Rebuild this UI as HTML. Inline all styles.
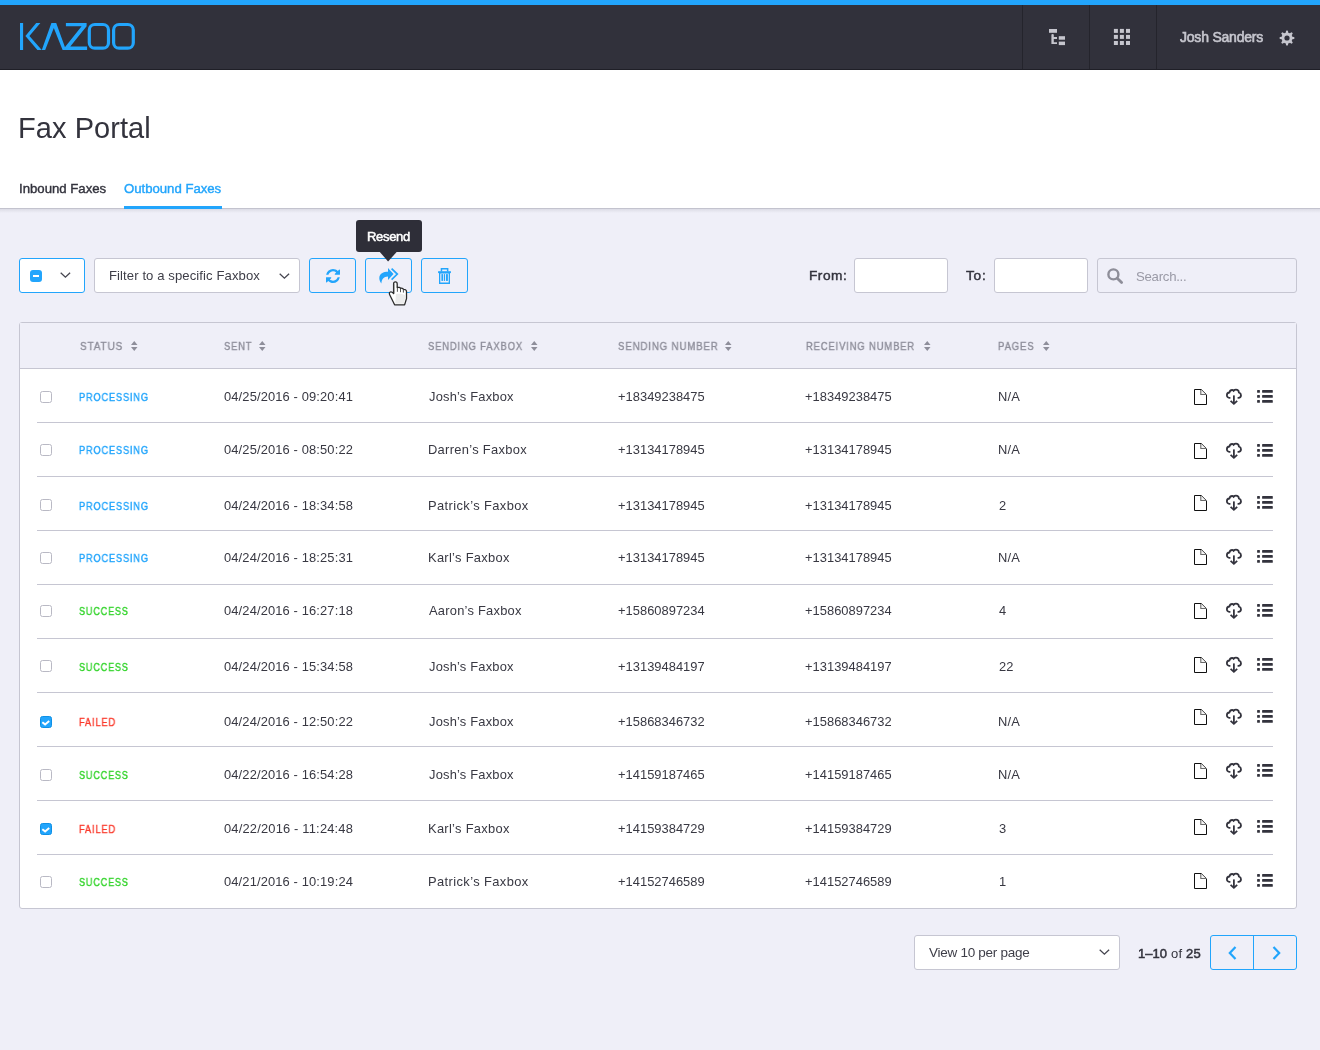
<!DOCTYPE html>
<html><head><meta charset="utf-8"><title>Fax Portal</title>
<style>
html,body{margin:0;padding:0;}
body{width:1320px;height:1050px;position:relative;overflow:hidden;background:#efeff8;font-family:"Liberation Sans", sans-serif;}
.t{position:absolute;white-space:pre;line-height:1;font-family:"Liberation Sans", sans-serif;will-change:transform;}
svg{overflow:visible}
</style></head><body>
<div style="position:absolute;left:0px;top:0px;width:1320px;height:5px;background:#22a5fc"></div>
<div style="position:absolute;left:0px;top:5px;width:1320px;height:64px;background:#31313b"></div>
<div style="position:absolute;left:0px;top:69px;width:1320px;height:1px;background:#1f1f27"></div>
<div style="position:absolute;left:1022px;top:5px;width:1px;height:64px;background:#24242c"></div>
<div style="position:absolute;left:1089px;top:5px;width:1px;height:64px;background:#24242c"></div>
<div style="position:absolute;left:1156px;top:5px;width:1px;height:64px;background:#24242c"></div>
<svg style="position:absolute;left:0px;top:0px;" width="160" height="70" viewBox="0 0 160 70"><g fill="#22a5fc">
<rect x="20" y="23" width="3.1" height="27"/>
<polygon points="36.2,23 40.4,23 29.4,35.9 41.8,50 37.4,50 25.4,35.9"/>
<polygon points="41.8,50 45.2,50 53.8,28 62.6,50 66,50 56.2,23 51.4,23"/>
<polygon points="65.9,23 86.6,23 86.6,26.2 70.3,46.6 87.1,46.6 87.1,50 63.5,50 63.5,49 81.6,26.2 65.9,26.2"/>
</g>
<g fill="none" stroke="#22a5fc" stroke-width="3.2">
<rect x="89.3" y="24.5" width="19.2" height="23.7" rx="5.5"/>
<rect x="113.6" y="24.5" width="19.7" height="23.7" rx="5.5"/>
</g></svg>
<svg style="position:absolute;left:1040px;top:20px;" width="30" height="30" viewBox="1040 20 30 30"><g fill="#c6c6ce">
<rect x="1049" y="29" width="8" height="3.8"/>
<path d="M1051.4 34.6 Q1052.6 33.6 1053.8 34.6 V37.1 H1057 V39 H1053.8 V42.3 H1057 V44.1 H1051.4 Z"/>
<rect x="1058.8" y="36.2" width="6.2" height="3.5"/>
<rect x="1058.8" y="41.6" width="6.2" height="3.5"/>
</g></svg>
<svg style="position:absolute;left:1105px;top:20px;" width="30" height="30" viewBox="1105 20 30 30"><g fill="#c6c6ce"><rect x="1113.9" y="28.9" width="4" height="4"/><rect x="1119.9" y="28.9" width="4" height="4"/><rect x="1126" y="28.9" width="4" height="4"/><rect x="1113.9" y="34.9" width="4" height="4"/><rect x="1119.9" y="34.9" width="4" height="4"/><rect x="1126" y="34.9" width="4" height="4"/><rect x="1113.9" y="41" width="4" height="4"/><rect x="1119.9" y="41" width="4" height="4"/><rect x="1126" y="41" width="4" height="4"/></g></svg>
<div class="t" style="left:1180.00px;top:30.45px;font-size:14px;font-weight:400;color:#c6c6ce;letter-spacing:-0.210px;-webkit-text-stroke:0.6px #c6c6ce;">Josh Sanders</div>
<svg style="position:absolute;left:1278.9px;top:29.9px;" width="16" height="16" viewBox="-8 -8 16 16"><g fill="#c6c6ce"><circle cx="0" cy="0" r="5.5"/><path transform="rotate(0)" d="M-1.35 -4.6 L-0.95 -7.2 Q0 -7.7 0.95 -7.2 L1.35 -4.6 Z"/><path transform="rotate(45)" d="M-1.35 -4.6 L-0.95 -7.2 Q0 -7.7 0.95 -7.2 L1.35 -4.6 Z"/><path transform="rotate(90)" d="M-1.35 -4.6 L-0.95 -7.2 Q0 -7.7 0.95 -7.2 L1.35 -4.6 Z"/><path transform="rotate(135)" d="M-1.35 -4.6 L-0.95 -7.2 Q0 -7.7 0.95 -7.2 L1.35 -4.6 Z"/><path transform="rotate(180)" d="M-1.35 -4.6 L-0.95 -7.2 Q0 -7.7 0.95 -7.2 L1.35 -4.6 Z"/><path transform="rotate(225)" d="M-1.35 -4.6 L-0.95 -7.2 Q0 -7.7 0.95 -7.2 L1.35 -4.6 Z"/><path transform="rotate(270)" d="M-1.35 -4.6 L-0.95 -7.2 Q0 -7.7 0.95 -7.2 L1.35 -4.6 Z"/><path transform="rotate(315)" d="M-1.35 -4.6 L-0.95 -7.2 Q0 -7.7 0.95 -7.2 L1.35 -4.6 Z"/></g><circle cx="0" cy="0" r="2.6" fill="#31313b"/></svg>
<div style="position:absolute;left:0px;top:70px;width:1320px;height:138px;background:#fff"></div>
<div style="position:absolute;left:0px;top:208px;width:1320px;height:1px;background:#c3c3ce"></div>
<div style="position:absolute;left:0px;top:209px;width:1320px;height:4px;background:linear-gradient(#dcdce6,#efeff8)"></div>
<div class="t" style="left:18.10px;top:114.05px;font-size:29px;font-weight:400;color:#33333d;letter-spacing:0.065px;">Fax Portal</div>
<div class="t" style="left:19.10px;top:181.83px;font-size:13.2px;font-weight:400;color:#33333d;letter-spacing:-0.004px;-webkit-text-stroke:0.4px #33333d;">Inbound Faxes</div>
<div class="t" style="left:124.10px;top:181.83px;font-size:13.2px;font-weight:400;color:#22a5fc;letter-spacing:-0.024px;-webkit-text-stroke:0.4px #22a5fc;">Outbound Faxes</div>
<div style="position:absolute;left:124px;top:206px;width:98px;height:3px;background:#22a5fc"></div>
<div style="position:absolute;left:19px;top:258px;width:66px;height:35px;box-sizing:border-box;border:1px solid #22a5fc;border-radius:3px;background:#fff"></div>
<div style="position:absolute;left:30px;top:270px;width:12px;height:12px;background:#22a5fc;border-radius:3px"></div>
<div style="position:absolute;left:32.8px;top:274.8px;width:6.4px;height:2.4px;background:#fff"></div>
<svg style="position:absolute;left:59.5px;top:272.4px;" width="12" height="7" viewBox="0 0 12 7"><polyline points="0.7,0.7 5.4,5.1 10.1,0.7" fill="none" stroke="#45454f" stroke-width="1.3"/></svg>
<div style="position:absolute;left:94px;top:258px;width:206px;height:35px;box-sizing:border-box;border:1px solid #c6c6d2;border-radius:3px;background:#fff"></div>
<div class="t" style="left:108.70px;top:268.91px;font-size:13.1px;font-weight:400;color:#3e3e48;letter-spacing:0.092px;">Filter to a specific Faxbox</div>
<svg style="position:absolute;left:278.8px;top:272.6px;" width="12" height="7" viewBox="0 0 12 7"><polyline points="0.7,0.7 5.4,5.1 10.1,0.7" fill="none" stroke="#45454f" stroke-width="1.3"/></svg>
<div style="position:absolute;left:309px;top:258px;width:47px;height:35px;box-sizing:border-box;border:1px solid #22a5fc;border-radius:3px"></div>
<div style="position:absolute;left:365px;top:258px;width:47px;height:35px;box-sizing:border-box;border:1px solid #22a5fc;border-radius:3px"></div>
<div style="position:absolute;left:421px;top:258px;width:47px;height:35px;box-sizing:border-box;border:1px solid #22a5fc;border-radius:3px"></div>
<svg style="position:absolute;left:326px;top:269px;" width="14" height="14" viewBox="0 0 1536 1536"><path fill="#22a5fc" d="M1511 928q0 5-1 7-64 268-268 434.5T764 1536q-146 0-282.5-55T238 1324l-129 129q-19 19-45 19t-45-19-19-45V960q0-26 19-45t45-19h448q26 0 45 19t19 45-19 45l-137 137q71 66 161 102t187 36q134 0 250-65t186-179q11-17 53-117 8-23 30-23h192q13 0 22.5 9.5t9.5 22.5zm25-800v448q0 26-19 45t-45 19h-448q-26 0-45-19t-19-45 19-45l138-138Q969 256 768 256q-134 0-250 65T332 500q-11 17-53 117-8 23-30 23H50q-13 0-22.5-9.5T18 608v-7q65-268 270-434.5T768 0q146 0 284 55.5T1297 212l130-129q19-19 45-19t45 19 19 45z"/></svg>
<svg style="position:absolute;left:378.5px;top:268px;" width="20" height="16" viewBox="0 0 20 16"><path fill="#22a5fc" d="M14.5 6.1 L9 0 L9 3.8 C4.5 3.8 0.3 5.5 0.3 10.3 C0.3 12.3 1.4 14.3 2.4 15.5 C2.6 11.8 4.5 8.6 9 8.6 L9 12.1 Z"/>
<polyline points="12.6,0.6 18.3,6.1 12.6,11.6" fill="none" stroke="#22a5fc" stroke-width="1.7"/></svg>
<svg style="position:absolute;left:438px;top:268px;" width="13" height="16" viewBox="0 0 12.8 16"><g fill="#22a5fc">
<path d="M2.6 0 H10.3 V3.6 H8.8 V1.4 H4.1 V3.6 H2.6 Z"/>
<rect x="0" y="3.2" width="12.8" height="1.9"/>
<path d="M0.9 4.8 H11.9 V15.9 H0.9 Z M2.2 5.6 V14.5 H10.6 V5.6 Z" fill-rule="evenodd"/>
<rect x="3.3" y="6.1" width="1.8" height="6.8"/>
<rect x="5.9" y="6.1" width="1.1" height="6.8"/>
<rect x="7.9" y="6.1" width="1.9" height="6.8"/>
</g></svg>
<div style="position:absolute;left:356px;top:220px;width:66px;height:32px;background:#2e2e38;border-radius:3px"></div>
<svg style="position:absolute;left:378.8px;top:251px;" width="20" height="11" viewBox="0 0 20 11"><polygon points="0,0 18.5,0 9.1,10.6" fill="#2e2e38"/></svg>
<div class="t" style="left:366.80px;top:230.00px;font-size:13px;font-weight:400;color:#ffffff;letter-spacing:-0.316px;-webkit-text-stroke:0.5px #ffffff;">Resend</div>
<svg style="position:absolute;left:384px;top:278px;" width="28" height="30" viewBox="384 278 28 30"><path d="M393.6 284 C393.6 281.2 397.2 281.2 397.2 284 L397.2 287.6 C398.5 287 400.3 287.3 400.5 288.4 C401.6 288 403.2 288.3 403.4 289.3 C404.8 289.2 406.5 289.9 406.5 291.6 L406.5 298.6 L404.6 304.8 L394.6 304.8 L389.8 295 C389 293.6 389.3 292.4 390.4 292 C391.6 291.6 392.6 292.4 393.6 293.6 Z" fill="#fff" stroke="#2a2a2a" stroke-width="1.3" stroke-linejoin="round"/>
<path d="M397.4 287.9 V291.8 M400.5 288.7 V292.2 M403.4 289.5 V292.6" stroke="#555" stroke-width="1" fill="none"/>
<path d="M394.4 284 V293.5" stroke="#999" stroke-width="0.8" fill="none"/>
<path d="M396 294 C399 293.5 404 294 405.5 295.5 L404 303.8 L395.2 303.8 Z" fill="#ececec"/></svg>
<div class="t" style="left:809.30px;top:268.70px;font-size:13.7px;font-weight:400;color:#33333d;letter-spacing:0.492px;-webkit-text-stroke:0.45px #33333d;">From:</div>
<div style="position:absolute;left:854px;top:258px;width:94px;height:35px;box-sizing:border-box;border:1px solid #c6c6d2;border-radius:3px;background:#fff"></div>
<div class="t" style="left:966.20px;top:268.70px;font-size:13.7px;font-weight:400;color:#33333d;letter-spacing:0.773px;-webkit-text-stroke:0.45px #33333d;">To:</div>
<div style="position:absolute;left:994px;top:258px;width:94px;height:35px;box-sizing:border-box;border:1px solid #c6c6d2;border-radius:3px;background:#fff"></div>
<div style="position:absolute;left:1097px;top:258px;width:200px;height:35px;box-sizing:border-box;border:1px solid #c6c6d2;border-radius:3px"></div>
<svg style="position:absolute;left:1106.5px;top:267.5px;" width="16" height="16" viewBox="0 0 16 16"><g fill="none" stroke="#8e8e99"><circle cx="6.4" cy="6.4" r="5" stroke-width="2.4"/><line x1="10.2" y1="10.2" x2="14.6" y2="14.6" stroke-width="2.8" stroke-linecap="round"/></g></svg>
<div class="t" style="left:1135.80px;top:270.23px;font-size:13.2px;font-weight:400;color:#9a9aa6;letter-spacing:-0.264px;">Search...</div>
<div style="position:absolute;left:19px;top:322px;width:1278px;height:587px;box-sizing:border-box;border:1px solid #c6c6d2;border-radius:3px;background:#fff;overflow:hidden"></div>
<div style="position:absolute;left:20px;top:323px;width:1276px;height:45px;background:#efeff8"></div>
<div style="position:absolute;left:20px;top:368px;width:1276px;height:1px;background:#c6c6d2"></div>
<div class="t" style="left:80.40px;top:340.92px;font-size:11.2px;font-weight:400;color:#8e8e9a;letter-spacing:1.000px;transform:scaleX(0.8892);transform-origin:0 0;-webkit-text-stroke:0.4px #8e8e9a;">STATUS</div>
<svg style="position:absolute;left:130.7px;top:341px;" width="6.5" height="10" viewBox="0 0 6.5 10"><g fill="#8e8e9a"><polygon points="0,4 3.25,0 6.5,4"/><polygon points="0,6 3.25,10 6.5,6"/></g></svg>
<div class="t" style="left:223.60px;top:340.92px;font-size:11.2px;font-weight:400;color:#8e8e9a;letter-spacing:1.000px;transform:scaleX(0.8363);transform-origin:0 0;-webkit-text-stroke:0.4px #8e8e9a;">SENT</div>
<svg style="position:absolute;left:259px;top:341px;" width="6.5" height="10" viewBox="0 0 6.5 10"><g fill="#8e8e9a"><polygon points="0,4 3.25,0 6.5,4"/><polygon points="0,6 3.25,10 6.5,6"/></g></svg>
<div class="t" style="left:427.50px;top:340.92px;font-size:11.2px;font-weight:400;color:#8e8e9a;letter-spacing:1.000px;transform:scaleX(0.8409);transform-origin:0 0;-webkit-text-stroke:0.4px #8e8e9a;">SENDING FAXBOX</div>
<svg style="position:absolute;left:531px;top:341px;" width="6.5" height="10" viewBox="0 0 6.5 10"><g fill="#8e8e9a"><polygon points="0,4 3.25,0 6.5,4"/><polygon points="0,6 3.25,10 6.5,6"/></g></svg>
<div class="t" style="left:618.10px;top:340.92px;font-size:11.2px;font-weight:400;color:#8e8e9a;letter-spacing:1.000px;transform:scaleX(0.8633);transform-origin:0 0;-webkit-text-stroke:0.4px #8e8e9a;">SENDING NUMBER</div>
<svg style="position:absolute;left:724.8px;top:341px;" width="6.5" height="10" viewBox="0 0 6.5 10"><g fill="#8e8e9a"><polygon points="0,4 3.25,0 6.5,4"/><polygon points="0,6 3.25,10 6.5,6"/></g></svg>
<div class="t" style="left:805.50px;top:340.92px;font-size:11.2px;font-weight:400;color:#8e8e9a;letter-spacing:1.000px;transform:scaleX(0.8442);transform-origin:0 0;-webkit-text-stroke:0.4px #8e8e9a;">RECEIVING NUMBER</div>
<svg style="position:absolute;left:924px;top:341px;" width="6.5" height="10" viewBox="0 0 6.5 10"><g fill="#8e8e9a"><polygon points="0,4 3.25,0 6.5,4"/><polygon points="0,6 3.25,10 6.5,6"/></g></svg>
<div class="t" style="left:998.10px;top:340.92px;font-size:11.2px;font-weight:400;color:#8e8e9a;letter-spacing:1.000px;transform:scaleX(0.8556);transform-origin:0 0;-webkit-text-stroke:0.4px #8e8e9a;">PAGES</div>
<svg style="position:absolute;left:1043px;top:341px;" width="6.5" height="10" viewBox="0 0 6.5 10"><g fill="#8e8e9a"><polygon points="0,4 3.25,0 6.5,4"/><polygon points="0,6 3.25,10 6.5,6"/></g></svg>
<div style="position:absolute;left:40px;top:391px;width:12px;height:12px;box-sizing:border-box;background:#fff;border:1px solid #b9b9c4;border-radius:2.5px"></div>
<div class="t" style="left:79.20px;top:391.79px;font-size:11px;font-weight:400;color:#22a5fc;letter-spacing:1.000px;transform:scaleX(0.8387);transform-origin:0 0;-webkit-text-stroke:0.4px #22a5fc;">PROCESSING</div>
<div class="t" style="left:224.00px;top:390.78px;font-size:12.9px;font-weight:400;color:#383842;letter-spacing:0.136px;">04/25/2016 - 09:20:41</div>
<div class="t" style="left:429.20px;top:390.78px;font-size:12.9px;font-weight:400;color:#383842;letter-spacing:0.191px;">Josh’s Faxbox</div>
<div class="t" style="left:617.70px;top:390.78px;font-size:12.9px;font-weight:400;color:#383842;letter-spacing:0.025px;">+18349238475</div>
<div class="t" style="left:804.50px;top:390.78px;font-size:12.9px;font-weight:400;color:#383842;letter-spacing:0.025px;">+18349238475</div>
<div class="t" style="left:998.20px;top:390.78px;font-size:12.9px;font-weight:400;color:#383842;letter-spacing:0.155px;">N/A</div>
<svg style="position:absolute;left:1194px;top:389px;" width="13" height="16" viewBox="0 0 13 16"><path d="M0.5 0.5 H7.2 L12.5 5.8 V15.5 H0.5 Z" fill="#fff" stroke="#111" stroke-width="1" stroke-linejoin="miter"/>
<path d="M7.1 0.9 L12.1 5.9 H6.8 Z" fill="#f4f4f4"/>
<path d="M6.8 0.9 V5.5 H12.2" fill="none" stroke="#6a6a6a" stroke-width="1.1"/></svg>
<svg style="position:absolute;left:1226px;top:389px;" width="16.2" height="16" viewBox="0 0 16.2 16"><g fill="none" stroke="#33333d" stroke-width="1.8">
<path d="M4.4 8.8 H3.2 C1.8 8.8 0.9 7.6 0.9 6.2 C0.9 4.7 2 3.6 3.4 3.5 C3.8 1.9 4.8 1 6.1 1 C6.8 1 7.3 1.3 7.6 1.8 C8.2 1.1 9 0.7 10 0.7 C11.6 0.7 12.8 1.9 12.9 3.5 C14.2 3.9 15 4.9 15 6.2 C15 7.7 13.9 8.8 12.4 8.8 H11.6"/>
<path d="M7.9 6.4 V14.8"/><path d="M4.6 11.8 L7.9 14.8 L11.2 11.8"/>
</g></svg>
<svg style="position:absolute;left:1257px;top:390px;" width="16" height="13" viewBox="0 0 16 13"><g fill="#33333d"><rect x="0.1" y="0" width="2.8" height="2.75" rx="0.5"/><rect x="5.1" y="0" width="10.7" height="2.75" rx="0.6"/><rect x="0.1" y="5.05" width="2.8" height="2.75" rx="0.5"/><rect x="5.1" y="5.05" width="10.7" height="2.75" rx="0.6"/><rect x="0.1" y="10.1" width="2.8" height="2.75" rx="0.5"/><rect x="5.1" y="10.1" width="10.7" height="2.75" rx="0.6"/></g></svg>
<div style="position:absolute;left:37px;top:422px;width:1236px;height:1px;background:#c6c6d2"></div>
<div style="position:absolute;left:40px;top:444px;width:12px;height:12px;box-sizing:border-box;background:#fff;border:1px solid #b9b9c4;border-radius:2.5px"></div>
<div class="t" style="left:79.20px;top:444.89px;font-size:11px;font-weight:400;color:#22a5fc;letter-spacing:1.000px;transform:scaleX(0.8387);transform-origin:0 0;-webkit-text-stroke:0.4px #22a5fc;">PROCESSING</div>
<div class="t" style="left:224.00px;top:443.88px;font-size:12.9px;font-weight:400;color:#383842;letter-spacing:0.136px;">04/25/2016 - 08:50:22</div>
<div class="t" style="left:428.20px;top:443.88px;font-size:12.9px;font-weight:400;color:#383842;letter-spacing:0.308px;">Darren’s Faxbox</div>
<div class="t" style="left:617.70px;top:443.88px;font-size:12.9px;font-weight:400;color:#383842;letter-spacing:0.025px;">+13134178945</div>
<div class="t" style="left:804.50px;top:443.88px;font-size:12.9px;font-weight:400;color:#383842;letter-spacing:0.025px;">+13134178945</div>
<div class="t" style="left:998.20px;top:443.88px;font-size:12.9px;font-weight:400;color:#383842;letter-spacing:0.155px;">N/A</div>
<svg style="position:absolute;left:1194px;top:443px;" width="13" height="16" viewBox="0 0 13 16"><path d="M0.5 0.5 H7.2 L12.5 5.8 V15.5 H0.5 Z" fill="#fff" stroke="#111" stroke-width="1" stroke-linejoin="miter"/>
<path d="M7.1 0.9 L12.1 5.9 H6.8 Z" fill="#f4f4f4"/>
<path d="M6.8 0.9 V5.5 H12.2" fill="none" stroke="#6a6a6a" stroke-width="1.1"/></svg>
<svg style="position:absolute;left:1226px;top:443px;" width="16.2" height="16" viewBox="0 0 16.2 16"><g fill="none" stroke="#33333d" stroke-width="1.8">
<path d="M4.4 8.8 H3.2 C1.8 8.8 0.9 7.6 0.9 6.2 C0.9 4.7 2 3.6 3.4 3.5 C3.8 1.9 4.8 1 6.1 1 C6.8 1 7.3 1.3 7.6 1.8 C8.2 1.1 9 0.7 10 0.7 C11.6 0.7 12.8 1.9 12.9 3.5 C14.2 3.9 15 4.9 15 6.2 C15 7.7 13.9 8.8 12.4 8.8 H11.6"/>
<path d="M7.9 6.4 V14.8"/><path d="M4.6 11.8 L7.9 14.8 L11.2 11.8"/>
</g></svg>
<svg style="position:absolute;left:1257px;top:444px;" width="16" height="13" viewBox="0 0 16 13"><g fill="#33333d"><rect x="0.1" y="0" width="2.8" height="2.75" rx="0.5"/><rect x="5.1" y="0" width="10.7" height="2.75" rx="0.6"/><rect x="0.1" y="5.05" width="2.8" height="2.75" rx="0.5"/><rect x="5.1" y="5.05" width="10.7" height="2.75" rx="0.6"/><rect x="0.1" y="10.1" width="2.8" height="2.75" rx="0.5"/><rect x="5.1" y="10.1" width="10.7" height="2.75" rx="0.6"/></g></svg>
<div style="position:absolute;left:37px;top:476px;width:1236px;height:1px;background:#c6c6d2"></div>
<div style="position:absolute;left:40px;top:499px;width:12px;height:12px;box-sizing:border-box;background:#fff;border:1px solid #b9b9c4;border-radius:2.5px"></div>
<div class="t" style="left:79.20px;top:500.69px;font-size:11px;font-weight:400;color:#22a5fc;letter-spacing:1.000px;transform:scaleX(0.8387);transform-origin:0 0;-webkit-text-stroke:0.4px #22a5fc;">PROCESSING</div>
<div class="t" style="left:224.00px;top:499.68px;font-size:12.9px;font-weight:400;color:#383842;letter-spacing:0.136px;">04/24/2016 - 18:34:58</div>
<div class="t" style="left:428.20px;top:499.68px;font-size:12.9px;font-weight:400;color:#383842;letter-spacing:0.395px;">Patrick’s Faxbox</div>
<div class="t" style="left:617.70px;top:499.68px;font-size:12.9px;font-weight:400;color:#383842;letter-spacing:0.025px;">+13134178945</div>
<div class="t" style="left:804.50px;top:499.68px;font-size:12.9px;font-weight:400;color:#383842;letter-spacing:0.025px;">+13134178945</div>
<div class="t" style="left:999.20px;top:499.68px;font-size:12.9px;font-weight:400;color:#383842;letter-spacing:0.200px;">2</div>
<svg style="position:absolute;left:1194px;top:495px;" width="13" height="16" viewBox="0 0 13 16"><path d="M0.5 0.5 H7.2 L12.5 5.8 V15.5 H0.5 Z" fill="#fff" stroke="#111" stroke-width="1" stroke-linejoin="miter"/>
<path d="M7.1 0.9 L12.1 5.9 H6.8 Z" fill="#f4f4f4"/>
<path d="M6.8 0.9 V5.5 H12.2" fill="none" stroke="#6a6a6a" stroke-width="1.1"/></svg>
<svg style="position:absolute;left:1226px;top:495px;" width="16.2" height="16" viewBox="0 0 16.2 16"><g fill="none" stroke="#33333d" stroke-width="1.8">
<path d="M4.4 8.8 H3.2 C1.8 8.8 0.9 7.6 0.9 6.2 C0.9 4.7 2 3.6 3.4 3.5 C3.8 1.9 4.8 1 6.1 1 C6.8 1 7.3 1.3 7.6 1.8 C8.2 1.1 9 0.7 10 0.7 C11.6 0.7 12.8 1.9 12.9 3.5 C14.2 3.9 15 4.9 15 6.2 C15 7.7 13.9 8.8 12.4 8.8 H11.6"/>
<path d="M7.9 6.4 V14.8"/><path d="M4.6 11.8 L7.9 14.8 L11.2 11.8"/>
</g></svg>
<svg style="position:absolute;left:1257px;top:496px;" width="16" height="13" viewBox="0 0 16 13"><g fill="#33333d"><rect x="0.1" y="0" width="2.8" height="2.75" rx="0.5"/><rect x="5.1" y="0" width="10.7" height="2.75" rx="0.6"/><rect x="0.1" y="5.05" width="2.8" height="2.75" rx="0.5"/><rect x="5.1" y="5.05" width="10.7" height="2.75" rx="0.6"/><rect x="0.1" y="10.1" width="2.8" height="2.75" rx="0.5"/><rect x="5.1" y="10.1" width="10.7" height="2.75" rx="0.6"/></g></svg>
<div style="position:absolute;left:37px;top:530px;width:1236px;height:1px;background:#c6c6d2"></div>
<div style="position:absolute;left:40px;top:552px;width:12px;height:12px;box-sizing:border-box;background:#fff;border:1px solid #b9b9c4;border-radius:2.5px"></div>
<div class="t" style="left:79.20px;top:552.79px;font-size:11px;font-weight:400;color:#22a5fc;letter-spacing:1.000px;transform:scaleX(0.8387);transform-origin:0 0;-webkit-text-stroke:0.4px #22a5fc;">PROCESSING</div>
<div class="t" style="left:224.00px;top:551.78px;font-size:12.9px;font-weight:400;color:#383842;letter-spacing:0.136px;">04/24/2016 - 18:25:31</div>
<div class="t" style="left:428.20px;top:551.78px;font-size:12.9px;font-weight:400;color:#383842;letter-spacing:0.299px;">Karl’s Faxbox</div>
<div class="t" style="left:617.70px;top:551.78px;font-size:12.9px;font-weight:400;color:#383842;letter-spacing:0.025px;">+13134178945</div>
<div class="t" style="left:804.50px;top:551.78px;font-size:12.9px;font-weight:400;color:#383842;letter-spacing:0.025px;">+13134178945</div>
<div class="t" style="left:998.20px;top:551.78px;font-size:12.9px;font-weight:400;color:#383842;letter-spacing:0.155px;">N/A</div>
<svg style="position:absolute;left:1194px;top:549px;" width="13" height="16" viewBox="0 0 13 16"><path d="M0.5 0.5 H7.2 L12.5 5.8 V15.5 H0.5 Z" fill="#fff" stroke="#111" stroke-width="1" stroke-linejoin="miter"/>
<path d="M7.1 0.9 L12.1 5.9 H6.8 Z" fill="#f4f4f4"/>
<path d="M6.8 0.9 V5.5 H12.2" fill="none" stroke="#6a6a6a" stroke-width="1.1"/></svg>
<svg style="position:absolute;left:1226px;top:549px;" width="16.2" height="16" viewBox="0 0 16.2 16"><g fill="none" stroke="#33333d" stroke-width="1.8">
<path d="M4.4 8.8 H3.2 C1.8 8.8 0.9 7.6 0.9 6.2 C0.9 4.7 2 3.6 3.4 3.5 C3.8 1.9 4.8 1 6.1 1 C6.8 1 7.3 1.3 7.6 1.8 C8.2 1.1 9 0.7 10 0.7 C11.6 0.7 12.8 1.9 12.9 3.5 C14.2 3.9 15 4.9 15 6.2 C15 7.7 13.9 8.8 12.4 8.8 H11.6"/>
<path d="M7.9 6.4 V14.8"/><path d="M4.6 11.8 L7.9 14.8 L11.2 11.8"/>
</g></svg>
<svg style="position:absolute;left:1257px;top:550px;" width="16" height="13" viewBox="0 0 16 13"><g fill="#33333d"><rect x="0.1" y="0" width="2.8" height="2.75" rx="0.5"/><rect x="5.1" y="0" width="10.7" height="2.75" rx="0.6"/><rect x="0.1" y="5.05" width="2.8" height="2.75" rx="0.5"/><rect x="5.1" y="5.05" width="10.7" height="2.75" rx="0.6"/><rect x="0.1" y="10.1" width="2.8" height="2.75" rx="0.5"/><rect x="5.1" y="10.1" width="10.7" height="2.75" rx="0.6"/></g></svg>
<div style="position:absolute;left:37px;top:584px;width:1236px;height:1px;background:#c6c6d2"></div>
<div style="position:absolute;left:40px;top:605px;width:12px;height:12px;box-sizing:border-box;background:#fff;border:1px solid #b9b9c4;border-radius:2.5px"></div>
<div class="t" style="left:79.20px;top:605.69px;font-size:11px;font-weight:400;color:#33d42b;letter-spacing:1.000px;transform:scaleX(0.8259);transform-origin:0 0;-webkit-text-stroke:0.4px #33d42b;">SUCCESS</div>
<div class="t" style="left:224.00px;top:604.68px;font-size:12.9px;font-weight:400;color:#383842;letter-spacing:0.136px;">04/24/2016 - 16:27:18</div>
<div class="t" style="left:429.20px;top:604.68px;font-size:12.9px;font-weight:400;color:#383842;letter-spacing:0.240px;">Aaron’s Faxbox</div>
<div class="t" style="left:617.70px;top:604.68px;font-size:12.9px;font-weight:400;color:#383842;letter-spacing:0.025px;">+15860897234</div>
<div class="t" style="left:804.50px;top:604.68px;font-size:12.9px;font-weight:400;color:#383842;letter-spacing:0.025px;">+15860897234</div>
<div class="t" style="left:999.20px;top:604.68px;font-size:12.9px;font-weight:400;color:#383842;letter-spacing:0.200px;">4</div>
<svg style="position:absolute;left:1194px;top:603px;" width="13" height="16" viewBox="0 0 13 16"><path d="M0.5 0.5 H7.2 L12.5 5.8 V15.5 H0.5 Z" fill="#fff" stroke="#111" stroke-width="1" stroke-linejoin="miter"/>
<path d="M7.1 0.9 L12.1 5.9 H6.8 Z" fill="#f4f4f4"/>
<path d="M6.8 0.9 V5.5 H12.2" fill="none" stroke="#6a6a6a" stroke-width="1.1"/></svg>
<svg style="position:absolute;left:1226px;top:603px;" width="16.2" height="16" viewBox="0 0 16.2 16"><g fill="none" stroke="#33333d" stroke-width="1.8">
<path d="M4.4 8.8 H3.2 C1.8 8.8 0.9 7.6 0.9 6.2 C0.9 4.7 2 3.6 3.4 3.5 C3.8 1.9 4.8 1 6.1 1 C6.8 1 7.3 1.3 7.6 1.8 C8.2 1.1 9 0.7 10 0.7 C11.6 0.7 12.8 1.9 12.9 3.5 C14.2 3.9 15 4.9 15 6.2 C15 7.7 13.9 8.8 12.4 8.8 H11.6"/>
<path d="M7.9 6.4 V14.8"/><path d="M4.6 11.8 L7.9 14.8 L11.2 11.8"/>
</g></svg>
<svg style="position:absolute;left:1257px;top:604px;" width="16" height="13" viewBox="0 0 16 13"><g fill="#33333d"><rect x="0.1" y="0" width="2.8" height="2.75" rx="0.5"/><rect x="5.1" y="0" width="10.7" height="2.75" rx="0.6"/><rect x="0.1" y="5.05" width="2.8" height="2.75" rx="0.5"/><rect x="5.1" y="5.05" width="10.7" height="2.75" rx="0.6"/><rect x="0.1" y="10.1" width="2.8" height="2.75" rx="0.5"/><rect x="5.1" y="10.1" width="10.7" height="2.75" rx="0.6"/></g></svg>
<div style="position:absolute;left:37px;top:638px;width:1236px;height:1px;background:#c6c6d2"></div>
<div style="position:absolute;left:40px;top:660px;width:12px;height:12px;box-sizing:border-box;background:#fff;border:1px solid #b9b9c4;border-radius:2.5px"></div>
<div class="t" style="left:79.20px;top:661.69px;font-size:11px;font-weight:400;color:#33d42b;letter-spacing:1.000px;transform:scaleX(0.8259);transform-origin:0 0;-webkit-text-stroke:0.4px #33d42b;">SUCCESS</div>
<div class="t" style="left:224.00px;top:660.68px;font-size:12.9px;font-weight:400;color:#383842;letter-spacing:0.136px;">04/24/2016 - 15:34:58</div>
<div class="t" style="left:429.20px;top:660.68px;font-size:12.9px;font-weight:400;color:#383842;letter-spacing:0.191px;">Josh’s Faxbox</div>
<div class="t" style="left:617.70px;top:660.68px;font-size:12.9px;font-weight:400;color:#383842;letter-spacing:0.025px;">+13139484197</div>
<div class="t" style="left:804.50px;top:660.68px;font-size:12.9px;font-weight:400;color:#383842;letter-spacing:0.025px;">+13139484197</div>
<div class="t" style="left:999.20px;top:660.68px;font-size:12.9px;font-weight:400;color:#383842;letter-spacing:0.200px;">22</div>
<svg style="position:absolute;left:1194px;top:657px;" width="13" height="16" viewBox="0 0 13 16"><path d="M0.5 0.5 H7.2 L12.5 5.8 V15.5 H0.5 Z" fill="#fff" stroke="#111" stroke-width="1" stroke-linejoin="miter"/>
<path d="M7.1 0.9 L12.1 5.9 H6.8 Z" fill="#f4f4f4"/>
<path d="M6.8 0.9 V5.5 H12.2" fill="none" stroke="#6a6a6a" stroke-width="1.1"/></svg>
<svg style="position:absolute;left:1226px;top:657px;" width="16.2" height="16" viewBox="0 0 16.2 16"><g fill="none" stroke="#33333d" stroke-width="1.8">
<path d="M4.4 8.8 H3.2 C1.8 8.8 0.9 7.6 0.9 6.2 C0.9 4.7 2 3.6 3.4 3.5 C3.8 1.9 4.8 1 6.1 1 C6.8 1 7.3 1.3 7.6 1.8 C8.2 1.1 9 0.7 10 0.7 C11.6 0.7 12.8 1.9 12.9 3.5 C14.2 3.9 15 4.9 15 6.2 C15 7.7 13.9 8.8 12.4 8.8 H11.6"/>
<path d="M7.9 6.4 V14.8"/><path d="M4.6 11.8 L7.9 14.8 L11.2 11.8"/>
</g></svg>
<svg style="position:absolute;left:1257px;top:658px;" width="16" height="13" viewBox="0 0 16 13"><g fill="#33333d"><rect x="0.1" y="0" width="2.8" height="2.75" rx="0.5"/><rect x="5.1" y="0" width="10.7" height="2.75" rx="0.6"/><rect x="0.1" y="5.05" width="2.8" height="2.75" rx="0.5"/><rect x="5.1" y="5.05" width="10.7" height="2.75" rx="0.6"/><rect x="0.1" y="10.1" width="2.8" height="2.75" rx="0.5"/><rect x="5.1" y="10.1" width="10.7" height="2.75" rx="0.6"/></g></svg>
<div style="position:absolute;left:37px;top:692px;width:1236px;height:1px;background:#c6c6d2"></div>
<div style="position:absolute;left:40px;top:716px;width:12px;height:12px;box-sizing:border-box;background:#22a5fc;border:1px solid #0e90e6;border-radius:2.5px"></div>
<svg style="position:absolute;left:40px;top:716px;" width="12" height="12" viewBox="0 0 12 12"><polyline points="2.3,6.3 5.1,8.4 9.2,5" fill="none" stroke="#fff" stroke-width="2"/></svg>
<div class="t" style="left:79.20px;top:716.59px;font-size:11px;font-weight:400;color:#fa3a2c;letter-spacing:1.000px;transform:scaleX(0.8426);transform-origin:0 0;-webkit-text-stroke:0.4px #fa3a2c;">FAILED</div>
<div class="t" style="left:224.00px;top:715.58px;font-size:12.9px;font-weight:400;color:#383842;letter-spacing:0.136px;">04/24/2016 - 12:50:22</div>
<div class="t" style="left:429.20px;top:715.58px;font-size:12.9px;font-weight:400;color:#383842;letter-spacing:0.191px;">Josh’s Faxbox</div>
<div class="t" style="left:617.70px;top:715.58px;font-size:12.9px;font-weight:400;color:#383842;letter-spacing:0.025px;">+15868346732</div>
<div class="t" style="left:804.50px;top:715.58px;font-size:12.9px;font-weight:400;color:#383842;letter-spacing:0.025px;">+15868346732</div>
<div class="t" style="left:998.20px;top:715.58px;font-size:12.9px;font-weight:400;color:#383842;letter-spacing:0.155px;">N/A</div>
<svg style="position:absolute;left:1194px;top:709px;" width="13" height="16" viewBox="0 0 13 16"><path d="M0.5 0.5 H7.2 L12.5 5.8 V15.5 H0.5 Z" fill="#fff" stroke="#111" stroke-width="1" stroke-linejoin="miter"/>
<path d="M7.1 0.9 L12.1 5.9 H6.8 Z" fill="#f4f4f4"/>
<path d="M6.8 0.9 V5.5 H12.2" fill="none" stroke="#6a6a6a" stroke-width="1.1"/></svg>
<svg style="position:absolute;left:1226px;top:709px;" width="16.2" height="16" viewBox="0 0 16.2 16"><g fill="none" stroke="#33333d" stroke-width="1.8">
<path d="M4.4 8.8 H3.2 C1.8 8.8 0.9 7.6 0.9 6.2 C0.9 4.7 2 3.6 3.4 3.5 C3.8 1.9 4.8 1 6.1 1 C6.8 1 7.3 1.3 7.6 1.8 C8.2 1.1 9 0.7 10 0.7 C11.6 0.7 12.8 1.9 12.9 3.5 C14.2 3.9 15 4.9 15 6.2 C15 7.7 13.9 8.8 12.4 8.8 H11.6"/>
<path d="M7.9 6.4 V14.8"/><path d="M4.6 11.8 L7.9 14.8 L11.2 11.8"/>
</g></svg>
<svg style="position:absolute;left:1257px;top:710px;" width="16" height="13" viewBox="0 0 16 13"><g fill="#33333d"><rect x="0.1" y="0" width="2.8" height="2.75" rx="0.5"/><rect x="5.1" y="0" width="10.7" height="2.75" rx="0.6"/><rect x="0.1" y="5.05" width="2.8" height="2.75" rx="0.5"/><rect x="5.1" y="5.05" width="10.7" height="2.75" rx="0.6"/><rect x="0.1" y="10.1" width="2.8" height="2.75" rx="0.5"/><rect x="5.1" y="10.1" width="10.7" height="2.75" rx="0.6"/></g></svg>
<div style="position:absolute;left:37px;top:746px;width:1236px;height:1px;background:#c6c6d2"></div>
<div style="position:absolute;left:40px;top:769px;width:12px;height:12px;box-sizing:border-box;background:#fff;border:1px solid #b9b9c4;border-radius:2.5px"></div>
<div class="t" style="left:79.20px;top:769.99px;font-size:11px;font-weight:400;color:#33d42b;letter-spacing:1.000px;transform:scaleX(0.8259);transform-origin:0 0;-webkit-text-stroke:0.4px #33d42b;">SUCCESS</div>
<div class="t" style="left:224.00px;top:768.98px;font-size:12.9px;font-weight:400;color:#383842;letter-spacing:0.136px;">04/22/2016 - 16:54:28</div>
<div class="t" style="left:429.20px;top:768.98px;font-size:12.9px;font-weight:400;color:#383842;letter-spacing:0.191px;">Josh’s Faxbox</div>
<div class="t" style="left:617.70px;top:768.98px;font-size:12.9px;font-weight:400;color:#383842;letter-spacing:0.025px;">+14159187465</div>
<div class="t" style="left:804.50px;top:768.98px;font-size:12.9px;font-weight:400;color:#383842;letter-spacing:0.025px;">+14159187465</div>
<div class="t" style="left:998.20px;top:768.98px;font-size:12.9px;font-weight:400;color:#383842;letter-spacing:0.155px;">N/A</div>
<svg style="position:absolute;left:1194px;top:763px;" width="13" height="16" viewBox="0 0 13 16"><path d="M0.5 0.5 H7.2 L12.5 5.8 V15.5 H0.5 Z" fill="#fff" stroke="#111" stroke-width="1" stroke-linejoin="miter"/>
<path d="M7.1 0.9 L12.1 5.9 H6.8 Z" fill="#f4f4f4"/>
<path d="M6.8 0.9 V5.5 H12.2" fill="none" stroke="#6a6a6a" stroke-width="1.1"/></svg>
<svg style="position:absolute;left:1226px;top:763px;" width="16.2" height="16" viewBox="0 0 16.2 16"><g fill="none" stroke="#33333d" stroke-width="1.8">
<path d="M4.4 8.8 H3.2 C1.8 8.8 0.9 7.6 0.9 6.2 C0.9 4.7 2 3.6 3.4 3.5 C3.8 1.9 4.8 1 6.1 1 C6.8 1 7.3 1.3 7.6 1.8 C8.2 1.1 9 0.7 10 0.7 C11.6 0.7 12.8 1.9 12.9 3.5 C14.2 3.9 15 4.9 15 6.2 C15 7.7 13.9 8.8 12.4 8.8 H11.6"/>
<path d="M7.9 6.4 V14.8"/><path d="M4.6 11.8 L7.9 14.8 L11.2 11.8"/>
</g></svg>
<svg style="position:absolute;left:1257px;top:764px;" width="16" height="13" viewBox="0 0 16 13"><g fill="#33333d"><rect x="0.1" y="0" width="2.8" height="2.75" rx="0.5"/><rect x="5.1" y="0" width="10.7" height="2.75" rx="0.6"/><rect x="0.1" y="5.05" width="2.8" height="2.75" rx="0.5"/><rect x="5.1" y="5.05" width="10.7" height="2.75" rx="0.6"/><rect x="0.1" y="10.1" width="2.8" height="2.75" rx="0.5"/><rect x="5.1" y="10.1" width="10.7" height="2.75" rx="0.6"/></g></svg>
<div style="position:absolute;left:37px;top:800px;width:1236px;height:1px;background:#c6c6d2"></div>
<div style="position:absolute;left:40px;top:823px;width:12px;height:12px;box-sizing:border-box;background:#22a5fc;border:1px solid #0e90e6;border-radius:2.5px"></div>
<svg style="position:absolute;left:40px;top:823px;" width="12" height="12" viewBox="0 0 12 12"><polyline points="2.3,6.3 5.1,8.4 9.2,5" fill="none" stroke="#fff" stroke-width="2"/></svg>
<div class="t" style="left:79.20px;top:823.99px;font-size:11px;font-weight:400;color:#fa3a2c;letter-spacing:1.000px;transform:scaleX(0.8426);transform-origin:0 0;-webkit-text-stroke:0.4px #fa3a2c;">FAILED</div>
<div class="t" style="left:224.00px;top:822.98px;font-size:12.9px;font-weight:400;color:#383842;letter-spacing:0.184px;">04/22/2016 - 11:24:48</div>
<div class="t" style="left:428.20px;top:822.98px;font-size:12.9px;font-weight:400;color:#383842;letter-spacing:0.299px;">Karl’s Faxbox</div>
<div class="t" style="left:617.70px;top:822.98px;font-size:12.9px;font-weight:400;color:#383842;letter-spacing:0.025px;">+14159384729</div>
<div class="t" style="left:804.50px;top:822.98px;font-size:12.9px;font-weight:400;color:#383842;letter-spacing:0.025px;">+14159384729</div>
<div class="t" style="left:999.20px;top:822.98px;font-size:12.9px;font-weight:400;color:#383842;letter-spacing:0.200px;">3</div>
<svg style="position:absolute;left:1194px;top:819px;" width="13" height="16" viewBox="0 0 13 16"><path d="M0.5 0.5 H7.2 L12.5 5.8 V15.5 H0.5 Z" fill="#fff" stroke="#111" stroke-width="1" stroke-linejoin="miter"/>
<path d="M7.1 0.9 L12.1 5.9 H6.8 Z" fill="#f4f4f4"/>
<path d="M6.8 0.9 V5.5 H12.2" fill="none" stroke="#6a6a6a" stroke-width="1.1"/></svg>
<svg style="position:absolute;left:1226px;top:819px;" width="16.2" height="16" viewBox="0 0 16.2 16"><g fill="none" stroke="#33333d" stroke-width="1.8">
<path d="M4.4 8.8 H3.2 C1.8 8.8 0.9 7.6 0.9 6.2 C0.9 4.7 2 3.6 3.4 3.5 C3.8 1.9 4.8 1 6.1 1 C6.8 1 7.3 1.3 7.6 1.8 C8.2 1.1 9 0.7 10 0.7 C11.6 0.7 12.8 1.9 12.9 3.5 C14.2 3.9 15 4.9 15 6.2 C15 7.7 13.9 8.8 12.4 8.8 H11.6"/>
<path d="M7.9 6.4 V14.8"/><path d="M4.6 11.8 L7.9 14.8 L11.2 11.8"/>
</g></svg>
<svg style="position:absolute;left:1257px;top:820px;" width="16" height="13" viewBox="0 0 16 13"><g fill="#33333d"><rect x="0.1" y="0" width="2.8" height="2.75" rx="0.5"/><rect x="5.1" y="0" width="10.7" height="2.75" rx="0.6"/><rect x="0.1" y="5.05" width="2.8" height="2.75" rx="0.5"/><rect x="5.1" y="5.05" width="10.7" height="2.75" rx="0.6"/><rect x="0.1" y="10.1" width="2.8" height="2.75" rx="0.5"/><rect x="5.1" y="10.1" width="10.7" height="2.75" rx="0.6"/></g></svg>
<div style="position:absolute;left:37px;top:854px;width:1236px;height:1px;background:#c6c6d2"></div>
<div style="position:absolute;left:40px;top:876px;width:12px;height:12px;box-sizing:border-box;background:#fff;border:1px solid #b9b9c4;border-radius:2.5px"></div>
<div class="t" style="left:79.20px;top:876.89px;font-size:11px;font-weight:400;color:#33d42b;letter-spacing:1.000px;transform:scaleX(0.8259);transform-origin:0 0;-webkit-text-stroke:0.4px #33d42b;">SUCCESS</div>
<div class="t" style="left:224.00px;top:875.88px;font-size:12.9px;font-weight:400;color:#383842;letter-spacing:0.136px;">04/21/2016 - 10:19:24</div>
<div class="t" style="left:428.20px;top:875.88px;font-size:12.9px;font-weight:400;color:#383842;letter-spacing:0.395px;">Patrick’s Faxbox</div>
<div class="t" style="left:617.70px;top:875.88px;font-size:12.9px;font-weight:400;color:#383842;letter-spacing:0.025px;">+14152746589</div>
<div class="t" style="left:804.50px;top:875.88px;font-size:12.9px;font-weight:400;color:#383842;letter-spacing:0.025px;">+14152746589</div>
<div class="t" style="left:999.20px;top:875.88px;font-size:12.9px;font-weight:400;color:#383842;letter-spacing:0.200px;">1</div>
<svg style="position:absolute;left:1194px;top:873px;" width="13" height="16" viewBox="0 0 13 16"><path d="M0.5 0.5 H7.2 L12.5 5.8 V15.5 H0.5 Z" fill="#fff" stroke="#111" stroke-width="1" stroke-linejoin="miter"/>
<path d="M7.1 0.9 L12.1 5.9 H6.8 Z" fill="#f4f4f4"/>
<path d="M6.8 0.9 V5.5 H12.2" fill="none" stroke="#6a6a6a" stroke-width="1.1"/></svg>
<svg style="position:absolute;left:1226px;top:873px;" width="16.2" height="16" viewBox="0 0 16.2 16"><g fill="none" stroke="#33333d" stroke-width="1.8">
<path d="M4.4 8.8 H3.2 C1.8 8.8 0.9 7.6 0.9 6.2 C0.9 4.7 2 3.6 3.4 3.5 C3.8 1.9 4.8 1 6.1 1 C6.8 1 7.3 1.3 7.6 1.8 C8.2 1.1 9 0.7 10 0.7 C11.6 0.7 12.8 1.9 12.9 3.5 C14.2 3.9 15 4.9 15 6.2 C15 7.7 13.9 8.8 12.4 8.8 H11.6"/>
<path d="M7.9 6.4 V14.8"/><path d="M4.6 11.8 L7.9 14.8 L11.2 11.8"/>
</g></svg>
<svg style="position:absolute;left:1257px;top:874px;" width="16" height="13" viewBox="0 0 16 13"><g fill="#33333d"><rect x="0.1" y="0" width="2.8" height="2.75" rx="0.5"/><rect x="5.1" y="0" width="10.7" height="2.75" rx="0.6"/><rect x="0.1" y="5.05" width="2.8" height="2.75" rx="0.5"/><rect x="5.1" y="5.05" width="10.7" height="2.75" rx="0.6"/><rect x="0.1" y="10.1" width="2.8" height="2.75" rx="0.5"/><rect x="5.1" y="10.1" width="10.7" height="2.75" rx="0.6"/></g></svg>
<div style="position:absolute;left:914px;top:935px;width:206px;height:35px;box-sizing:border-box;border:1px solid #c6c6d2;border-radius:3px;background:#fff"></div>
<div class="t" style="left:929.00px;top:945.87px;font-size:13.5px;font-weight:400;color:#3e3e48;letter-spacing:-0.275px;">View 10 per page</div>
<svg style="position:absolute;left:1098.5px;top:948.8px;" width="12" height="7" viewBox="0 0 12 7"><polyline points="0.7,0.7 5.4,5.1 10.1,0.7" fill="none" stroke="#45454f" stroke-width="1.3"/></svg>
<div class="t" style="left:1138.00px;top:946.70px;font-size:13px;font-weight:400;color:#33333d;letter-spacing:0.003px;-webkit-text-stroke:0.5px #33333d;">1–10</div>
<div class="t" style="left:1171.20px;top:946.70px;font-size:13px;font-weight:400;color:#33333d;letter-spacing:0.370px;">of</div>
<div class="t" style="left:1186.00px;top:946.70px;font-size:13px;font-weight:400;color:#33333d;letter-spacing:0.370px;-webkit-text-stroke:0.5px #33333d;">25</div>
<div style="position:absolute;left:1210px;top:935px;width:87px;height:35px;box-sizing:border-box;border:1px solid #22a5fc;border-radius:3px"></div>
<div style="position:absolute;left:1253px;top:935px;width:1px;height:35px;background:#22a5fc"></div>
<svg style="position:absolute;left:1227.5px;top:946px;" width="9" height="14" viewBox="0 0 9 14"><polyline points="7.5,1 1.8,7 7.5,13" fill="none" stroke="#22a5fc" stroke-width="2.2"/></svg>
<svg style="position:absolute;left:1272px;top:946px;" width="9" height="14" viewBox="0 0 9 14"><polyline points="1.5,1 7.2,7 1.5,13" fill="none" stroke="#22a5fc" stroke-width="2.2"/></svg>
</body></html>
